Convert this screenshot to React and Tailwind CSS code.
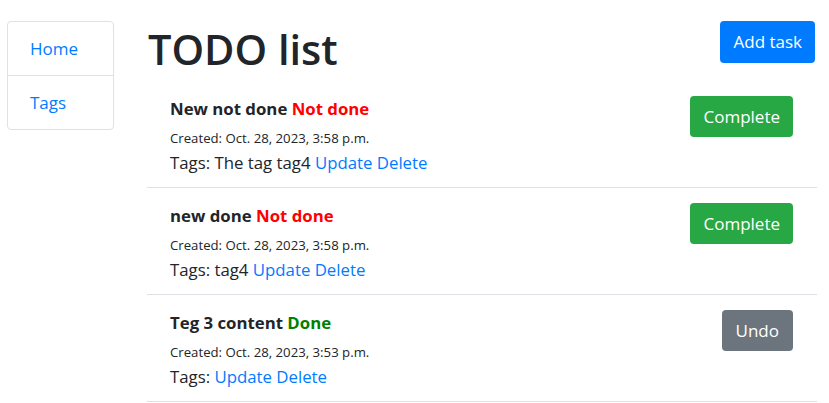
import React from "react";

const tasks = [
  { id: 1, title: "New not done", done: false, created: "Oct. 28, 2023, 3:58 p.m.", tags: "The tag tag4" },
  { id: 2, title: "new done", done: false, created: "Oct. 28, 2023, 3:58 p.m.", tags: "tag4" },
  { id: 3, title: "Teg 3 content", done: true, created: "Oct. 28, 2023, 3:53 p.m.", tags: "" },
];

const TaskRow = ({ task }) => (
  <li className="flex justify-between border-b border-[#dee2e6] pl-[23px] pr-[24px] pt-[15px] h-[107px]">
    <div className="flex flex-col">
      <div className="text-[16.8px] font-bold leading-[24px] mt-[1px]">
        {task.title}{" "}
        {task.done ? (
          <span className="text-[#008000]">Done</span>
        ) : (
          <span className="text-[#ff0000]">Not done</span>
        )}
      </div>
      <div className="text-[13.2px] leading-[20px] mt-[7px]">Created: {task.created}</div>
      <div className="text-[16.8px] leading-[24px] mt-[3px]">
        Tags: {task.tags ? task.tags + " " : ""}
        <a href="#" className="text-[#007bff]">Update</a>{" "}
        <a href="#" className="text-[#007bff]">Delete</a>
      </div>
    </div>
    <div>
      {task.done ? (
        <button className="h-[41px] px-[14px] rounded-[4px] bg-[#6c757d] text-white text-[17px]">Undo</button>
      ) : (
        <button className="h-[41px] px-[13px] rounded-[4px] bg-[#28a745] text-white text-[17px]">Complete</button>
      )}
    </div>
  </li>
);

export default function App() {
  return (
    <div className="min-h-screen bg-white text-[#212529] font-['Segoe_UI','Open_Sans',sans-serif] flex items-start pt-[21px]">
      <ul className="ml-[7px] w-[107px] border border-[#dee2e6] rounded-[4px]">
        <li className="h-[54px] flex items-center pl-[22px] border-b border-[#dee2e6]">
          <a href="#" className="text-[#007bff] text-[17px]">Home</a>
        </li>
        <li className="h-[53px] flex items-center pl-[22px]">
          <a href="#" className="text-[#007bff] text-[17px]">Tags</a>
        </li>
      </ul>
      <div className="ml-[33px] w-[670px]">
        <div className="flex justify-between items-start">
          <h1 className="text-[41.5px] leading-[61px] font-semibold ml-[1px] mt-[-2px] h-[62px]">TODO list</h1>
          <button className="h-[42px] px-[13px] rounded-[4px] bg-[#007bff] text-white text-[17px] mr-[2px]">Add task</button>
        </div>
        <ul>
          {tasks.map((t) => (
            <TaskRow key={t.id} task={t} />
          ))}
        </ul>
      </div>
    </div>
  );
}
